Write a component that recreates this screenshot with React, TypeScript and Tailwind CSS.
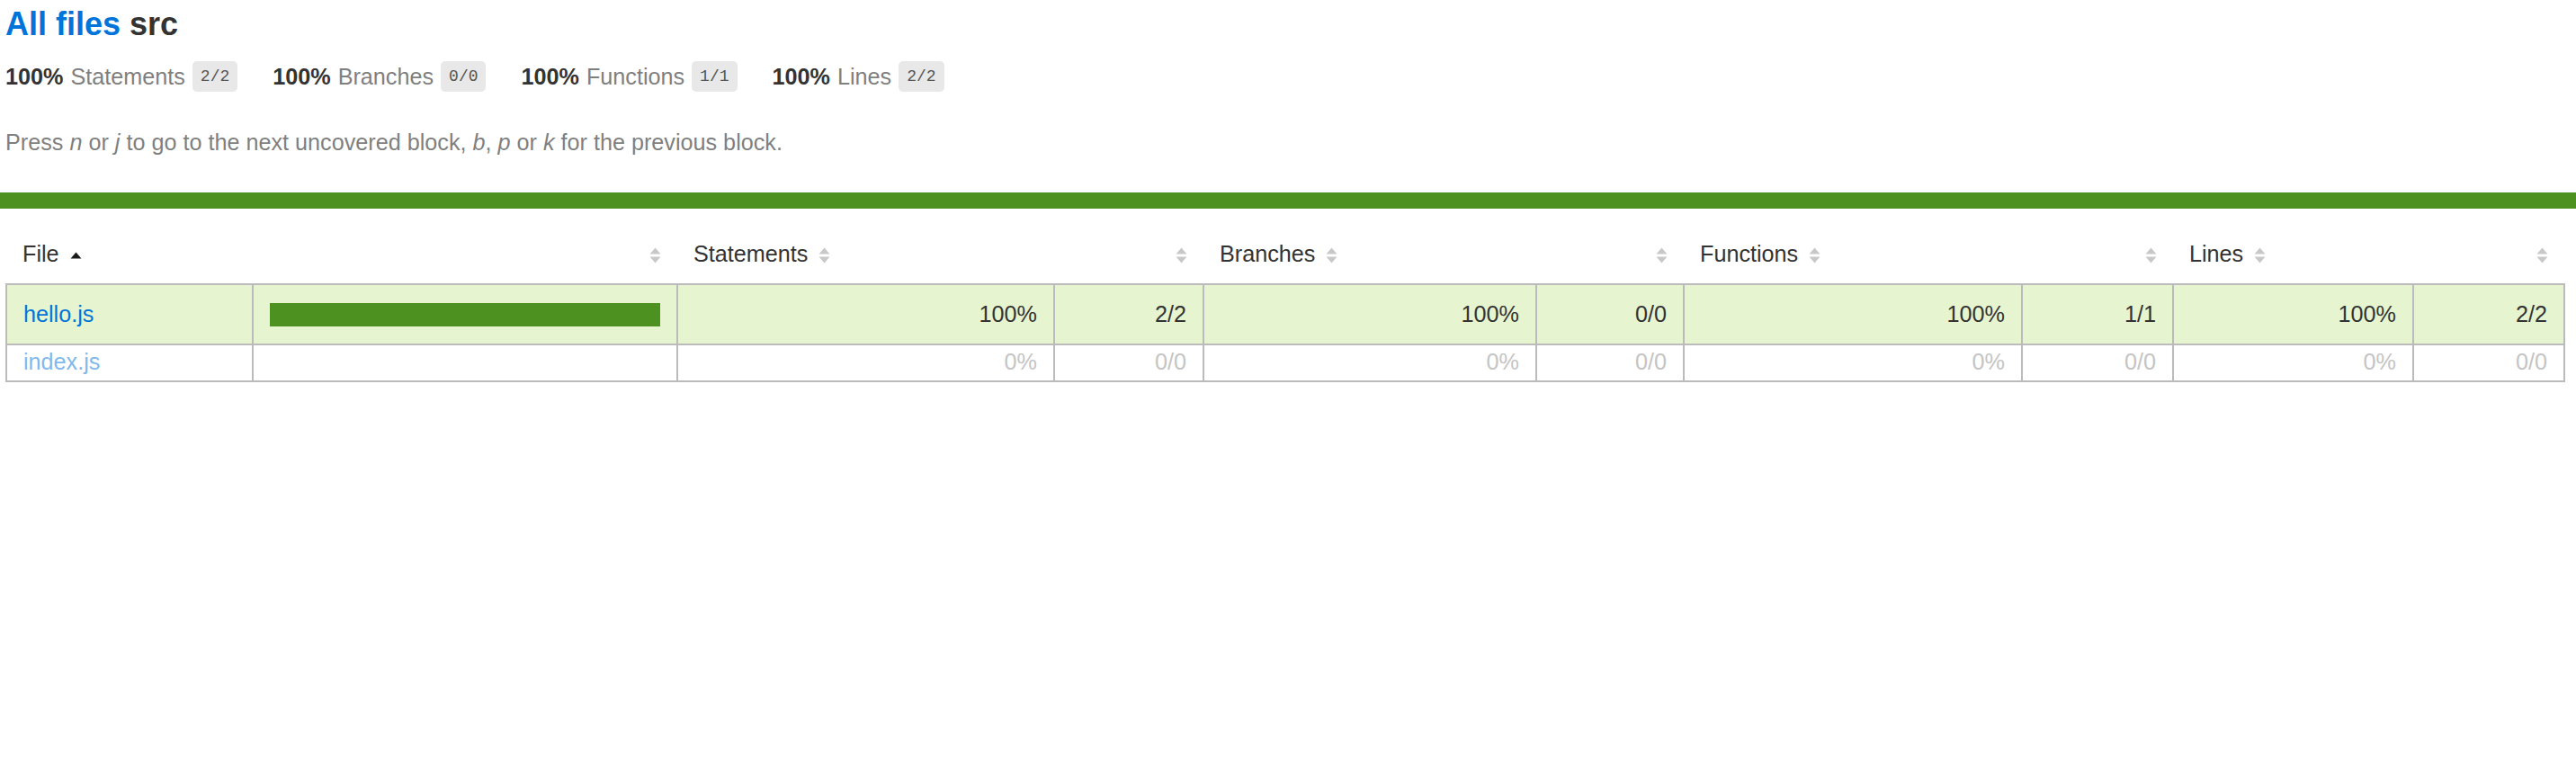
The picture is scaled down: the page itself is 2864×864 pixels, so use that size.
import React from 'react';

type Metric = { label: string; pct: string; frac: string };

const summary: Metric[] = [
    { label: 'Statements', pct: '100%', frac: '2/2' },
    { label: 'Branches', pct: '100%', frac: '0/0' },
    { label: 'Functions', pct: '100%', frac: '1/1' },
    { label: 'Lines', pct: '100%', frac: '2/2' },
];

type Row = {
    file: string;
    covered: boolean;
    cells: string[];
};

const rows: Row[] = [
    { file: 'hello.js', covered: true, cells: ['100%', '2/2', '100%', '0/0', '100%', '1/1', '100%', '2/2'] },
    { file: 'index.js', covered: false, cells: ['0%', '0/0', '0%', '0/0', '0%', '0/0', '0%', '0/0'] },
];

function Sorter({ sorted, spaced = true }: { sorted?: boolean; spaced?: boolean }) {
    return (
        <svg
            width="13"
            height="18"
            viewBox="0 0 13 18"
            className={spaced ? 'ml-[12px] inline-block' : 'inline-block'}
        >
            {sorted ? (
                <path d="M6.5 5.5 L12.5 12.5 H0.5 Z" fill="#1a1a1a" />
            ) : (
                <>
                    <path d="M6.5 0.5 L12.5 7.5 H0.5 Z" fill="#c8c8c8" />
                    <path d="M0.5 10.5 H12.5 L6.5 17.5 Z" fill="#c8c8c8" />
                </>
            )}
        </svg>
    );
}

export default function App() {
    return (
        <div className="min-h-screen bg-white font-['Liberation_Sans',Arial,sans-serif] text-[25.2px] leading-[29px] text-[#333]">
            <div className="pl-[6px] pr-[12px] pt-[6px]">
                <h1 className="text-[36px] font-bold leading-[41px]">
                    <a className="text-[#0074d9]">All files</a> src
                </h1>

                <div className="mt-[21px] flex h-[34px] items-center">
                    {summary.map((m) => (
                        <div key={m.label} className="mr-[39px] flex items-center gap-[8px]">
                            <span className="font-bold">{m.pct}</span>
                            <span className="text-[#7f7f7f]">{m.label}</span>
                            <span className="rounded-[5px] bg-[#e8e8e8] px-[9px] py-[7px] font-['Liberation_Mono',monospace] text-[18px] leading-[20px] text-[#555]">
                                {m.frac}
                            </span>
                        </div>
                    ))}
                </div>

                <p className="mt-[42px] text-[#7f7f7f]">
                    Press <em>n</em> or <em>j</em> to go to the next uncovered block, <em>b</em>, <em>p</em> or{' '}
                    <em>k</em> for the previous block.
                </p>
            </div>

            <div className="mt-[41px] h-[18px] bg-[#4d9221]" />

            <div className="pl-[6px] pr-[12px] pt-[18px]">
                <table className="w-full table-fixed border-collapse">
                    <colgroup>
                        <col className="w-[274px]" />
                        <col className="w-[472px]" />
                        <col className="w-[419px]" />
                        <col className="w-[166px]" />
                        <col className="w-[370px]" />
                        <col className="w-[164px]" />
                        <col className="w-[376px]" />
                        <col className="w-[168px]" />
                        <col className="w-[267px]" />
                        <col className="w-[168px]" />
                    </colgroup>
                    <thead>
                        <tr className="border-b-2 border-[#bbb]">
                            <th className="whitespace-nowrap p-[18px] text-left font-normal">
                                File
                                <Sorter sorted />
                            </th>
                            <th className="p-[18px] text-right font-normal">
                                <Sorter spaced={false} />
                            </th>
                            <th className="whitespace-nowrap p-[18px] text-left font-normal">
                                Statements
                                <Sorter />
                            </th>
                            <th className="p-[18px] text-right font-normal">
                                <Sorter spaced={false} />
                            </th>
                            <th className="whitespace-nowrap p-[18px] text-left font-normal">
                                Branches
                                <Sorter />
                            </th>
                            <th className="p-[18px] text-right font-normal">
                                <Sorter spaced={false} />
                            </th>
                            <th className="whitespace-nowrap p-[18px] text-left font-normal">
                                Functions
                                <Sorter />
                            </th>
                            <th className="p-[18px] text-right font-normal">
                                <Sorter spaced={false} />
                            </th>
                            <th className="whitespace-nowrap p-[18px] text-left font-normal">
                                Lines
                                <Sorter />
                            </th>
                            <th className="p-[18px] text-right font-normal">
                                <Sorter spaced={false} />
                            </th>
                        </tr>
                    </thead>
                    <tbody className="border-2 border-[#bbb]">
                        {rows.map((r) =>
                            r.covered ? (
                                <tr key={r.file} className="border-b-2 border-[#bbb] bg-[#e6f5d0]">
                                    <td className="whitespace-nowrap border-r-2 border-[#bbb] p-[18px]">
                                        <a className="text-[#0074d9]">{r.file}</a>
                                    </td>
                                    <td className="border-r-2 border-[#bbb] p-[18px] align-middle">
                                        <div className="h-[26px] bg-[#4d9221]" />
                                    </td>
                                    {r.cells.map((c, i) => (
                                        <td
                                            key={i}
                                            className={
                                                i === r.cells.length - 1
                                                    ? 'p-[18px] text-right'
                                                    : 'border-r-2 border-[#bbb] p-[18px] text-right'
                                            }
                                        >
                                            {c}
                                        </td>
                                    ))}
                                </tr>
                            ) : (
                                <tr key={r.file} className="border-b-2 border-[#bbb] bg-white leading-[25px]">
                                    <td className="whitespace-nowrap border-r-2 border-[#bbb] px-[18px] pb-[8px] pt-[6px]">
                                        <a className="text-[#80b9ec]">{r.file}</a>
                                    </td>
                                    <td className="border-r-2 border-[#bbb] px-[18px] pb-[8px] pt-[6px]" />
                                    {r.cells.map((c, i) => (
                                        <td
                                            key={i}
                                            className={
                                                i === r.cells.length - 1
                                                    ? 'px-[18px] pb-[8px] pt-[6px] text-right text-[#c4c4c4]'
                                                    : 'border-r-2 border-[#bbb] px-[18px] pb-[8px] pt-[6px] text-right text-[#c4c4c4]'
                                            }
                                        >
                                            {c}
                                        </td>
                                    ))}
                                </tr>
                            ),
                        )}
                    </tbody>
                </table>
            </div>
        </div>
    );
}
